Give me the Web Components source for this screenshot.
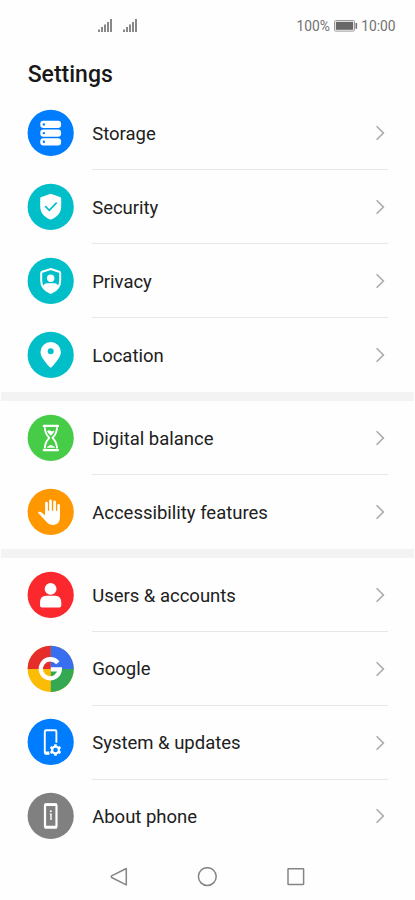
<!DOCTYPE html>
<html lang="en">
<head>
<meta charset="utf-8">
<title>Settings</title>
<style>
body{margin:0;background:#fefefe;font-family:Roboto,sans-serif;color:#202020;overflow:hidden}
</style>
</head>
<body>
<settings-screen></settings-screen>
<script>
const ICONS = {
storage: ['#007dff', `<g fill="#fff"><rect x="12.7" y="11" width="20.8" height="7.2" rx="3"/><rect x="12.7" y="19.7" width="20.8" height="7.2" rx="3"/><rect x="12.7" y="28.4" width="20.8" height="7.2" rx="3"/></g><g fill="#007dff"><circle cx="16.3" cy="14.6" r="1.2"/><circle cx="16.3" cy="23.3" r="1.2"/><circle cx="16.3" cy="32" r="1.2"/></g>`],
security: ['#00bfc9', `<path fill="#fff" d="M23.1 10 32.4 13.2Q33.6 13.6 33.6 14.9V22.5C33.6 29 29.8 33 24.2 35.4Q23.1 35.9 22 35.4C16.4 33 12.6 29 12.6 22.5V14.9Q12.6 13.6 13.8 13.2Z"/><path d="m17.6 22.4 4.1 4.1 7.4-7.7" fill="none" stroke="#00bfc9" stroke-width="1.7"/>`],
privacy: ['#00bfc9', `<path fill="none" stroke="#fff" stroke-width="2" d="M23.1 11.2 31.6 14Q32.6 14.4 32.6 15.5V22.6C32.6 29 29 32.5 23.8 34.8Q23.1 35.1 22.4 34.8C17.2 32.5 13.6 29 13.6 22.6V15.5Q13.6 14.4 14.6 14Z"/><circle cx="23.1" cy="20.5" r="3.7" fill="#fff"/><path fill="#fff" d="M15.4 29.2Q16 25.4 19.5 25.4H26.7Q30.2 25.4 30.8 29.2 28.5 33.4 23.1 35.4 17.7 33.4 15.4 29.2Z"/>`],
location: ['#00bfc9', `<path fill="#fff" fill-rule="evenodd" d="M23.1 35.8Q22.5 35.8 22 35.1C18.5 31 12.9 25.2 12.9 20.1A10.2 9.9 0 0 1 33.3 20.1C33.3 25.2 27.7 31 24.2 35.1Q23.7 35.8 23.1 35.8ZM23.1 16.5a3 3 0 1 0 0 6 3 3 0 1 0 0-6Z"/>`],
balance: ['#47cc47', `<g stroke="#fff" stroke-width="1.9" fill="none" stroke-linejoin="round"><path d="M16.3 11.1H30.3M16.3 35.3H30.3" stroke-width="2.4" stroke-linecap="round"/><path d="M17.2 12.5C17.2 18 18.7 20.1 21.7 23.1 18.7 26.2 17.2 28.6 17.2 33.8M29.4 12.5C29.4 18 27.9 20.1 24.9 23.1 27.9 26.2 29.4 28.6 29.4 33.8"/></g><path fill="#fff" d="M19.4 16.4Q21.4 14.8 23.3 16.2 25.2 17 27 15.8 26.5 18.2 23.3 20.9 20.3 18.3 19.4 16.4ZM19 33C19.6 31.2 22 31 23.3 29.9 24.6 31 27 31.2 27.6 33Z"/>`],
hand: ['#ff9800', `<g stroke="#fff" stroke-width="2.7" stroke-linecap="round" fill="none"><path d="M18.9 26V14.2M22.9 25V12.1M27 25V13.1M31 27V16.6"/></g><path fill="#fff" d="M17.6 22H32.3V28.8C32.3 33.5 29.7 36.1 25.5 36.1 21.7 36.1 19.6 34.2 17.7 31.7L10.6 24.3Q10.2 23.7 11 23 12.5 22.6 14 23.8L17.6 26.8Z"/>`],
user: ['#fb292e', `<circle cx="23" cy="17.1" r="5.9" fill="#fff"/><path fill="#fff" d="M12.4 31.1Q12.4 23.9 18.5 23.9H27.6Q33.7 23.9 33.7 31.1V33.8Q33.7 35.8 31.7 35.8H14.4Q12.4 35.8 12.4 33.8Z"/>`],
google: ['#fbbc05', `<path fill="#e52d2b" d="M0 23.2A23 23 0 0 1 23.2 0V23.2Z"/><path fill="#376ff0" d="M23.2 0A23 23 0 0 1 46.2 23.2H23.2Z"/><path fill="#34a853" d="M46.2 23.2A23 23 0 0 1 23.2 46.2V23.2Z"/><path fill="none" stroke="#fff" stroke-width="4.3" d="M30.2 17.1A9.5 9.5 0 1 0 32.2 23.6H23.2"/>`],
system: ['#007dff', `<path d="M21.8 34.9H18.5Q17.2 34.9 17.2 33.6V12.9Q17.2 11.5 18.5 11.5H27.5Q28.8 11.5 28.8 12.9V24" fill="none" stroke="#fff" stroke-width="1.9"/><path d="M17.2 34.1H21.6" stroke="#fff" stroke-width="2.8"/><circle cx="27.9" cy="31.2" r="3.4" fill="none" stroke="#fff" stroke-width="2.2"/><path d="M27.9 25.4V28M27.9 34.4V37M22.9 28.3 25.1 29.6M30.7 32.8 32.9 34.1M22.9 34.1 25.1 32.8M30.7 29.6 32.9 28.3" stroke="#fff" stroke-width="2.6"/>`],
about: ['#808080', `<rect x="17.4" y="11.8" width="11.5" height="22.8" rx="1" fill="none" stroke="#fff" stroke-width="2.2"/><path d="M17 11.9H29.3M17 34.3H29.3" stroke="#fff" stroke-width="2.8"/><circle cx="23.2" cy="18.4" r="1" fill="#fff"/><path d="M22.2 21.3H23.4V27.2" stroke="#fff" stroke-width="1.4" fill="none"/>`]
};

function define(name, html) {
  const template = document.createElement('template');
  template.innerHTML = html;
  customElements.define(name, class extends HTMLElement {
    constructor() {
      super();
      this.attachShadow({mode: 'open'}).append(template.content.cloneNode(true));
    }
  });
}

customElements.define('setting-icon', class extends HTMLElement {
  connectedCallback() {
    const [color, art] = ICONS[this.getAttribute('name')];
    const root = this.shadowRoot || this.attachShadow({mode: 'open'});
    root.innerHTML = `<style>:host{display:block;width:46.2px;height:46.2px;flex:none}svg{display:block;overflow:visible}</style>
      <svg width="46.2" height="46.2" viewBox="0.4 0.2 46.2 46.2"><circle cx="23.1" cy="23.1" r="23.1" fill="${color}"/>${art}</svg>`;
  }
});

define('setting-row', `<style>
:host{display:flex;height:73.87px;box-sizing:border-box;padding:0 27px 0 27.6px;gap:18.4px;align-items:center}
.body{flex:1;height:100%;box-sizing:border-box;display:flex;align-items:center;justify-content:space-between;border-bottom:1px solid #e7e7e7;padding-top:1px}
:host([last]) .body{border-color:transparent}
.label{font-size:18.5px;line-height:24px;white-space:nowrap;padding-top:1.5px;letter-spacing:-.01px}
svg{display:block;margin-right:2px}
</style><slot name="icon"></slot><div class="body"><span class="label"><slot></slot></span>
<svg width="11" height="16" viewBox="0 0 11 16"><path d="M1.6 1.2 8.4 8 1.6 14.8" fill="none" stroke="#aaa" stroke-width="1.6"/></svg></div>`);

define('setting-group', `<style>
:host{display:block}
:host([banded])::before{content:"";display:block;height:9.2px;background:#f3f3f3;margin:0 1px}
</style><slot></slot>`);

define('status-bar', `<style>
:host{display:flex;height:50px;box-sizing:border-box;padding:2px 19.5px 0 97px;align-items:center;justify-content:space-between;font-size:13.8px;color:#707070}
div{display:flex;align-items:center}
.signals{gap:10px}.power{gap:3.6px}svg{display:block}
</style>
<div class="signals">
<svg width="15" height="14" viewBox="0 0 15 14"><path d="M2 10.5V13M5 8V13M8 5.5V13M11 3V13M14 0V13" stroke="#747474" stroke-width="1.7"/></svg>
<svg width="15" height="14" viewBox="0 0 15 14"><path d="M2 10.5V13M5 8V13M8 5.5V13M11 3V13M14 0V13" stroke="#747474" stroke-width="1.7"/></svg>
</div>
<div class="power"><span>100%</span>
<svg width="24" height="12" viewBox="0 0 24 12"><rect x=".5" y=".5" width="20" height="10.6" rx="1.2" fill="#fefefe" stroke="#999"/><rect x="1.8" y="1.8" width="17.4" height="8" fill="#686868"/><path d="M22.3 3V8.8" stroke="#707070" stroke-width="1.6"/></svg>
<span>10:00</span></div>`);

define('nav-bar', `<style>
:host{display:flex;justify-content:space-between;align-items:center;height:46.8px;padding:0 109.5px 0 108.5px}
svg{display:block}
</style>
<svg width="20" height="20" viewBox="0 0 20 20"><path d="M17.3 1.5V17.9L2.6 10.5Q1.8 9.7 2.6 8.9Z" fill="none" stroke="#858585" stroke-width="1.5" stroke-linejoin="round"/></svg>
<svg width="20" height="20" viewBox="0 0 20 20"><circle cx="10.3" cy="9.6" r="8.9" fill="none" stroke="#858585" stroke-width="1.5"/></svg>
<svg width="20" height="20" viewBox="0 0 20 20"><rect x="2" y="1.7" width="15.6" height="15.8" rx=".6" fill="none" stroke="#858585" stroke-width="1.5"/></svg>`);

define('page-title', `<style>
:host{display:block;height:46.6px;line-height:50px;padding-left:27.7px;font-size:23px;font-weight:500;color:#191919}
</style><slot></slot>`);

const GROUPS = [
  [['storage','Storage'],['security','Security'],['privacy','Privacy'],['location','Location']],
  [['balance','Digital balance'],['hand','Accessibility features']],
  [['user','Users &amp; accounts'],['google','Google'],['system','System &amp; updates'],['about','About phone']]
];
define('settings-screen', `<style>:host{display:flex;flex-direction:column;height:900px;width:415px}</style>
<status-bar></status-bar><page-title>Settings</page-title>
${GROUPS.map((rows, g) => `<setting-group${g ? ' banded' : ''}>${rows.map(([icon, label], i) =>
  `<setting-row${i === rows.length - 1 ? ' last' : ''}><setting-icon slot="icon" name="${icon}"></setting-icon>${label}</setting-row>`).join('')}</setting-group>`).join('')}
<nav-bar></nav-bar>`);
</script>
</body>
</html>
